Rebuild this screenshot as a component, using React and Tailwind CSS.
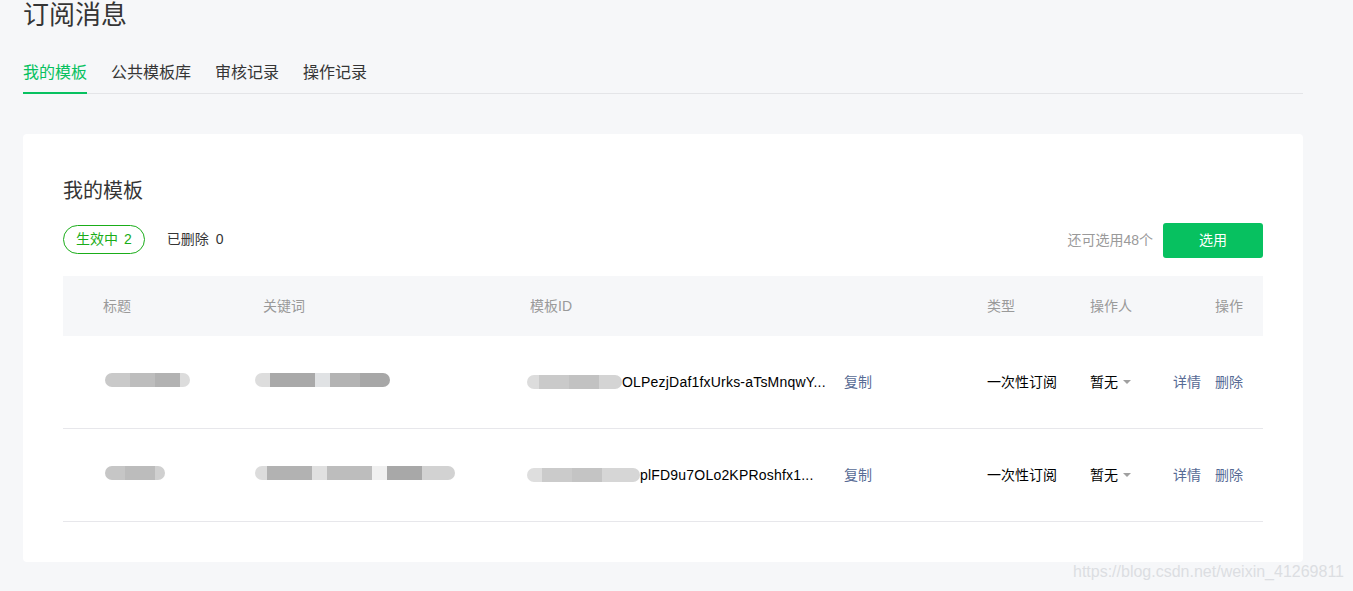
const mosaic = (shades) => (
    <span className="inline-flex h-[14px] shrink-0 items-center overflow-hidden rounded-full blur-[0.6px]">
        {shades.map((s, i) => (
            <span key={i} className="block h-full" style={{ width: s[0], background: s[1] }} />
        ))}
    </span>
);

const rows = [
    {
        title: mosaic([[25, "#c9c9c9"], [25, "#bdbdbd"], [25, "#b2b2b2"], [10, "#dcdcdc"]]),
        keyword: mosaic([[15, "#dddddd"], [45, "#a9a9a9"], [15, "#e0e2e4"], [30, "#b3b3b3"], [30, "#a7a7a7"]]),
        idBlur: mosaic([[12, "#dcdcdc"], [30, "#cacaca"], [30, "#c2c2c2"], [23, "#d4d4d4"]]),
        idText: "OLPezjDaf1fxUrks-aTsMnqwY...",
    },
    {
        title: mosaic([[20, "#c6c6c6"], [30, "#bcbcbc"], [10, "#d0d0d0"]]),
        keyword: mosaic([[12, "#dcdcdc"], [45, "#b2b2b2"], [15, "#e0e0e0"], [45, "#bdbdbd"], [15, "#f0f0f0"], [35, "#a8a8a8"], [33, "#d2d2d2"]]),
        idBlur: mosaic([[15, "#dedede"], [30, "#cbcbcb"], [30, "#c4c4c4"], [38, "#d6d6d6"]]),
        idText: "plFD9u7OLo2KPRoshfx1...",
    },
];

const cols = "grid grid-cols-[160px_267px_457px_103px_83px_70px] pl-10 pr-5";

export default function App() {
    return (
        <div className="relative min-h-[591px] bg-[#f6f7f9] pl-[23px] pb-[30px] text-[#353535] font-['Liberation_Sans','Noto_Sans_CJK_SC',sans-serif]">
            <div className="w-[1280px]">
                <h1 className="text-[26px] leading-[30px] font-normal">订阅消息</h1>
                <div className="mt-[31px] flex gap-6 border-b border-[#e4e5e8] text-[16px] leading-[24px]">
                    <div className="-mb-px border-b-2 border-[#07c160] pb-[7px] text-[#07c160]">我的模板</div>
                    <div className="pb-[7px]">公共模板库</div>
                    <div className="pb-[7px]">审核记录</div>
                    <div className="pb-[7px]">操作记录</div>
                </div>

                <div className="mt-10 rounded bg-white px-10 pt-[43px] pb-10">
                    <h2 className="text-[20px] leading-[28px] font-normal">我的模板</h2>
                    <div className="mt-[18px] flex h-[35px] items-center justify-between text-[14px]">
                        <div className="flex items-center gap-[22px]">
                            <span className="-mt-[3px] flex h-[29px] items-center gap-[6px] rounded-full border border-[#1aad19] px-[12px] text-[#1aad19]">
                                <span>生效中</span>
                                <span>2</span>
                            </span>
                            <span className="-mt-[3px] flex gap-[7px]">
                                <span>已删除</span>
                                <span>0</span>
                            </span>
                        </div>
                        <div className="flex items-center gap-[10px]">
                            <span className="text-[#9a9a9a]">还可选用48个</span>
                            <button className="h-[35px] w-[100px] rounded-[3px] bg-[#07c160] text-white">选用</button>
                        </div>
                    </div>

                    <div className="mt-[18px] text-[14px]">
                        <div className={`${cols} h-[60px] items-center bg-[#f6f7f9] text-[#9a9a9a]`}>
                            <div>标题</div>
                            <div>关键词</div>
                            <div>模板ID</div>
                            <div>类型</div>
                            <div>操作人</div>
                            <div className="text-right">操作</div>
                        </div>
                        {rows.map((r, i) => (
                            <div key={i} className={`${cols} h-[93px] items-center border-b border-[#e7e7eb]`}>
                                <div className="pl-[2px]">{r.title}</div>
                                <div className="-ml-2">{r.keyword}</div>
                                <div className="-ml-[3px] flex items-center">
                                    <span className="flex w-[300px] items-center whitespace-nowrap tracking-[0.2px] text-black">
                                        {r.idBlur}
                                        <span>{r.idText}</span>
                                    </span>
                                    <span className="ml-[17px] text-[#576b95]">复制</span>
                                </div>
                                <div className="text-black">一次性订阅</div>
                                <div className="flex items-center text-black">
                                    暂无
                                    <span className="ml-[5px] h-0 w-0 border-x-[4px] border-t-[4px] border-x-transparent border-t-[#a0a0a0]" />
                                </div>
                                <div className="flex justify-end gap-[14px] text-[#576b95]">
                                    <span>详情</span>
                                    <span>删除</span>
                                </div>
                            </div>
                        ))}
                    </div>
                </div>
            </div>
            <div className="absolute right-[9px] bottom-[8px] text-[16px] text-[#dcdee2]">https://blog.csdn.net/weixin_41269811</div>
        </div>
    );
}
